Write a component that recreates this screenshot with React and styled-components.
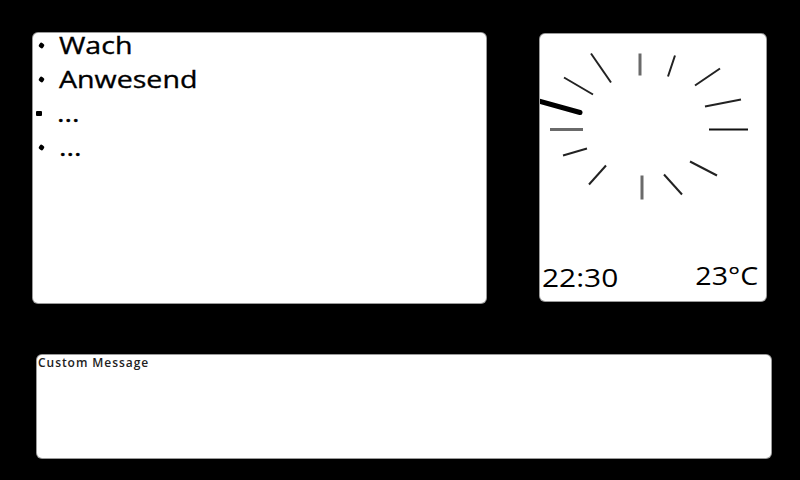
import styled, { createGlobalStyle } from 'styled-components';

const GlobalStyle = createGlobalStyle`
  html, body {
    margin: 0;
    background: #000;
  }
  body {
    font-family: 'Open Sans', 'DejaVu Sans', sans-serif;
  }
`;

const Page = styled.div`
  width: 800px;
  height: 480px;
  box-sizing: border-box;
  padding: 33px 0 0 33px;
  background: #000;
  overflow: hidden;
`;

const TopRow = styled.div`
  display: flex;
  align-items: flex-start;
  gap: 54px;
`;

const Panel = styled.div`
  background: #fff;
  border-radius: 5px;
  box-shadow: 0 0 0 1px #9a9a9a;
  box-sizing: border-box;
  overflow: hidden;
`;

const StatusPanel = styled(Panel)`
  width: 453px;
  height: 270px;
`;

const StatusList = styled.ul`
  list-style: none;
  margin: 0;
  padding: 0 0 0 6px;
`;

const StatusItem = styled.li`
  display: flex;
  align-items: flex-start;
  height: 34px;
  font-size: 24px;
  color: #000;
  line-height: 24px;
`;

const StatusText = styled.span`
  display: inline-block;
  transform: scaleX(1.19);
  transform-origin: left center;
  -webkit-text-stroke: 0.35px #000;
`;

const Bullet = styled.span`
  width: ${(p) => (p.$square ? '6px' : '5px')};
  height: 5px;
  margin-right: 15px;
  margin-left: ${(p) => (p.$square ? '-3px' : '0')};
  margin-top: 10px;
  background: #000;
  border-radius: ${(p) => (p.$square ? '1px' : '35%')};
  transform: ${(p) => (p.$square ? 'none' : 'rotate(35deg)')};
  flex: none;
`;

const ClockPanel = styled(Panel)`
  width: 226px;
  height: 267px;
  margin-top: 1px;
  display: flex;
  flex-direction: column;
`;

const Dial = styled.svg`
  display: block;
  flex: 1;
`;

const ClockFooter = styled.div`
  display: flex;
  justify-content: space-between;
  align-items: flex-end;
  padding: 0 8px 9px 2px;
  font-size: 26px;
  line-height: 30px;
  color: #000;
`;

const FooterValue = styled.span`
  display: inline-block;
  position: relative;
  top: ${(p) => p.$shift || 0}px;
  transform: scaleX(${(p) => p.$scale});
  transform-origin: ${(p) => (p.$right ? 'right' : 'left')} center;
`;

const MessagePanel = styled(Panel)`
  width: 734px;
  height: 103px;
  margin: 52px 0 0 4px;
  padding: 0 0 0 1px;
`;

const MessageLabel = styled.div`
  font-size: 12px;
  letter-spacing: 0.95px;
  line-height: 15px;
  color: #222;
  font-weight: 600;
`;

const ticks = [
  [100, 18, 100, 40, '#6a6a6a', 3],
  [135, 20, 128, 41, '#222', 2],
  [180, 33, 155, 50, '#222', 2],
  [201, 64, 165, 71, '#222', 2],
  [169, 94, 208, 94, '#111', 2],
  [51, 18, 71, 47, '#222', 2],
  [24, 42, 53, 59, '#222', 2],
  [10, 94, 43, 94, '#6a6a6a', 3],
  [23, 120, 47, 113, '#222', 2],
  [49, 149, 66, 130, '#222', 2],
  [102, 140, 102, 164, '#6a6a6a', 3],
  [124, 139, 142, 159, '#222', 2],
  [150, 126, 177, 140, '#222', 2],
];

const statuses = [
  { label: 'Wach' },
  { label: 'Anwesend' },
  { label: '...', square: true },
  { label: '...' },
];

export default function App() {
  return (
    <Page>
      <GlobalStyle />
      <TopRow>
        <StatusPanel>
          <StatusList>
            {statuses.map((s, i) => (
              <StatusItem key={i}>
                <Bullet $square={s.square} />
                <StatusText>{s.label}</StatusText>
              </StatusItem>
            ))}
          </StatusList>
        </StatusPanel>
        <ClockPanel>
          <Dial viewBox="0 0 226 225" width="226" height="225">
            {ticks.map(([x1, y1, x2, y2, c, w], i) => (
              <line key={i} x1={x1} y1={y1} x2={x2} y2={y2} stroke={c} strokeWidth={w} />
            ))}
            <line x1={-10} y1={63} x2={40} y2={77} stroke="#000" strokeWidth={5} strokeLinecap="round" />
          </Dial>
          <ClockFooter>
            <FooterValue $scale={1.15}>22:30</FooterValue>
            <FooterValue $shift={-2} $scale={1.1} $right>23°C</FooterValue>
          </ClockFooter>
        </ClockPanel>
      </TopRow>
      <MessagePanel>
        <MessageLabel>Custom Message</MessageLabel>
      </MessagePanel>
    </Page>
  );
}
